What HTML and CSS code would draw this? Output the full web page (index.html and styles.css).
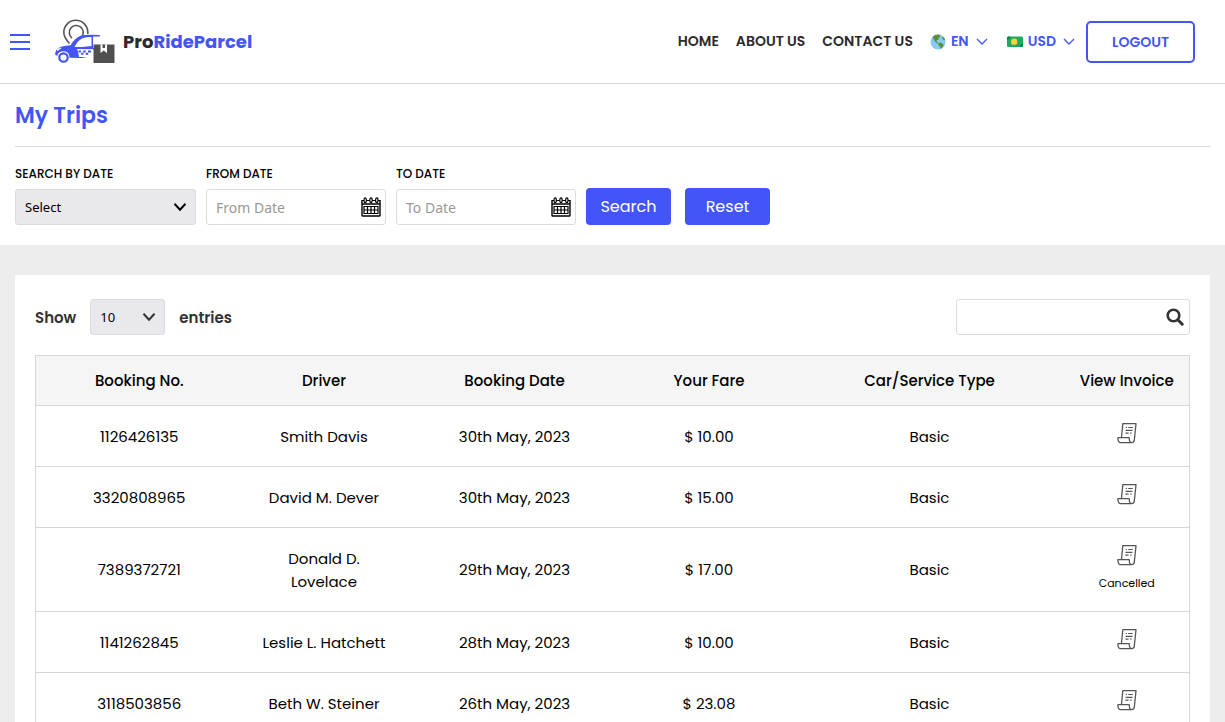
FILE: index.html
```html
<!DOCTYPE html>
<html lang="en">

<head>
    <meta charset="UTF-8">
    <meta name="viewport" content="width=device-width, initial-scale=1.0">
    <title>My Trips | ProRideParcel</title>
    <link rel="stylesheet" href="styles.css">
</head>

<body>
    <!-- shared icons -->
    <svg class="sprite" aria-hidden="true">
        <symbol id="arrow" viewBox="0 0 14 10">
            <path d="M1.5 1.8 7 7.8l5.5-6" fill="none" stroke="currentColor" stroke-width="2" />
        </symbol>
        <symbol id="arrow-thin" viewBox="0 0 12 8">
            <path d="M1 1l5 5 5-5" fill="none" stroke="currentColor" stroke-width="1.3" />
        </symbol>
        <symbol id="calendar" viewBox="0 0 20 20">
            <path d="M1 3v15.2q0 .8.8.8h16.4q.8 0 .8-.8V3M1 7h18" fill="none" stroke="currentColor" stroke-width="1.4" />
            <path d="M1 3.5h2M5.5 3.5h3M11.5 3.5h3M17 3.5h2" stroke="currentColor" stroke-width="1" />
            <g fill="none" stroke="currentColor" stroke-width="1.2">
                <ellipse cx="4.2" cy="3.2" rx="1.2" ry="2.3" />
                <ellipse cx="10" cy="3.2" rx="1.2" ry="2.3" />
                <ellipse cx="15.8" cy="3.2" rx="1.2" ry="2.3" />
            </g>
            <path d="M3 9.5h14v7H3zM3 13h14M6.5 9.5v7M10 9.5v7M13.5 9.5v7" fill="none" stroke="currentColor" stroke-width="1.2" />
        </symbol>
        <symbol id="invoice" viewBox="0 0 20 22">
            <path d="M4.5 15.2 5.8 1.7h13.2l-1.7 16.5q-.4 2.5-2.6 2.5H3.6Q.9 20.7.9 15.7h11.3q.1 5 2.5 5" fill="none" stroke="currentColor" stroke-width="1.3" stroke-linejoin="round" />
            <path d="M8.8 5.5H10M11.2 5.5h4.6M8.6 8.3h6.9M8.4 11.2h3.2M13.2 11.2h1.4" stroke="currentColor" stroke-width="1.2" />
        </symbol>
    </svg>

    <header class="header">
        <button class="menu-btn" aria-label="Menu"><span></span><span></span><span></span></button>
        <a href="#" class="logo">
            <svg class="logo-icon" viewBox="0 0 60 46" aria-hidden="true">
                <g fill="none" stroke="#555" stroke-width="1.6">
                    <path d="M14.5 24.5Q8.8 18.5 8.8 13.3a12 12 0 0 1 24 0v1.7" />
                    <path d="M17 19a7 7 0 1 1 10-1.5" />
                </g>
                <path d="M0 35.5q.2-3.500 2-5.5 3-3 13.5-3.8Q20 19 25.5 16.8q5.5-1.8 19.3-.8v1.5h-6.8v11.5l6 .5-5.5 1.2-16.500-.4q2 3.5 4.5 6.6l8.5.6-8 1.5-12.500-.3q0-6.500-5.8-6.5-5.9 0-6.400 4.8z" fill="#4355f9" />
                <path d="M19.5 28q3.5-7 8-8.8 3-1 9-1.1v9l-9.500.9z" fill="#fff" />
                <path d="M1 29.8l6-1-4.5 3.2z" fill="#fff" />
                <circle cx="8.5" cy="38.5" r="4.2" fill="#fff" stroke="#4355f9" stroke-width="2.2" />
                <path d="M22.5 30.3h15.7v5l-3 2.6H24z" fill="#fff" />
                <path d="M23.5 31.5H26v2h-2.5zM28.2 31.5h2.5v2h-2.5zM33 31.5h3v2h-3zM26 33.7h2.5v2H26zM30.7 33.7h2.5v2h-2.5z" fill="#4355f9" />
                <path d="M38.500 25.5h21V44h-21z" fill="#505050" />
                <path d="M45.5 25.5h6.5v8.5l-3.2-2.5-3.3 2.5z" fill="#fff" />
                <path d="M47.5 25.5H50V29h-2.5z" fill="#505050" />
            </svg>
            <span class="logo-text">Pro<span>RideParcel</span></span>
        </a>
        <nav class="nav">
            <a href="#">HOME</a>
            <a href="#">ABOUT US</a>
            <a href="#">CONTACT US</a>
            <button class="switcher">
                <svg width="16" height="16" viewBox="0 0 16 16" aria-hidden="true">
                    <circle cx="8" cy="8" r="7.5" fill="#89c9f9" />
                    <path d="M2.5 3Q5 .5 8.5.6l2 .7-.6 1.9-1.5.5.5 1.5-2.4 1.3.8 1.7 2 1-.7.8-2.6-1.6-2-2.4z" fill="#5c9237" />
                    <path d="M8.5 9l2.6-.2 2.7 1.8-1 2.2-2.2 2.3-.8-2.8-1.7-1.5zM12.3 2.3q2.4 1.4 3.1 4.2l-1.8-.6-1.4-1.6z" fill="#5c9237" />
                </svg>
                EN
                <svg class="caret" width="12" height="8"><use href="#arrow-thin" /></svg>
            </button>
            <button class="switcher">
                <svg width="16" height="16" viewBox="0 0 16 16" aria-hidden="true">
                    <rect y="2.5" width="16" height="10.5" rx="1.5" fill="#1aab5c" />
                    <path d="M0 5.5V4Q0 2.5 1.5 2.5H3q0 3-3 3zM16 10v1.500q0 1.5-1.5 1.5H13q0-3 3-3z" fill="#0b7d4b" />
                    <circle cx="7.2" cy="7.8" r="3.2" fill="#fbd043" />
                </svg>
                USD
                <svg class="caret" width="12" height="8"><use href="#arrow-thin" /></svg>
            </button>
            <button class="logout">LOGOUT</button>
        </nav>
    </header>

    <section class="filter-section">
        <h1>My Trips</h1>
        <form class="filters" onsubmit="return false">
            <div class="field">
                <label for="searchBy">SEARCH BY DATE</label>
                <div class="control">
                    <select id="searchBy">
                        <option>Select</option>
                        <option>Today</option>
                        <option>This Week</option>
                        <option>This Month</option>
                    </select>
                    <svg class="select-arrow" width="14" height="10"><use href="#arrow" /></svg>
                </div>
            </div>
            <div class="field">
                <label for="fromDate">FROM DATE</label>
                <div class="control">
                    <input type="text" id="fromDate" placeholder="From Date">
                    <svg class="calendar-icon" width="20" height="20"><use href="#calendar" /></svg>
                </div>
            </div>
            <div class="field">
                <label for="toDate">TO DATE</label>
                <div class="control">
                    <input type="text" id="toDate" placeholder="To Date">
                    <svg class="calendar-icon" width="20" height="20"><use href="#calendar" /></svg>
                </div>
            </div>
            <div class="button-group">
                <button type="submit" class="btn">Search</button>
                <button type="reset" class="btn">Reset</button>
            </div>
        </form>
    </section>

    <main class="content">
        <div class="card">
            <div class="table-tools">
                <div class="entries">
                    <label for="entries">Show</label>
                    <div class="control">
                        <select id="entries">
                            <option>10</option>
                            <option>25</option>
                            <option>50</option>
                        </select>
                        <svg class="select-arrow" width="14" height="10"><use href="#arrow" /></svg>
                    </div>
                    <span>entries</span>
                </div>
                <div class="control search-box">
                    <input type="text" aria-label="Search trips">
                    <svg class="search-icon" width="18" height="18" viewBox="0 0 18 18" aria-hidden="true">
                        <circle cx="7.5" cy="7.5" r="5.8" fill="none" stroke="currentColor" stroke-width="2.6" />
                        <path d="M11.8 11.8l4.4 4.4" stroke="currentColor" stroke-width="3" stroke-linecap="round" />
                    </svg>
                </div>
            </div>

            <table class="trips">
                <colgroup>
                    <col class="col-booking">
                    <col class="col-driver">
                    <col class="col-date">
                    <col class="col-fare">
                    <col class="col-type">
                    <col class="col-invoice">
                </colgroup>
                <thead>
                    <tr>
                        <th>Booking No.</th>
                        <th>Driver</th>
                        <th>Booking Date</th>
                        <th>Your Fare</th>
                        <th>Car/Service Type</th>
                        <th>View Invoice</th>
                    </tr>
                </thead>
                <tbody>
                    <tr>
                        <td>1126426135</td>
                        <td>Smith Davis</td>
                        <td>30th May, 2023</td>
                        <td>$ 10.00</td>
                        <td>Basic</td>
                        <td><a href="#" class="invoice" aria-label="View invoice"><svg width="20" height="22"><use href="#invoice" /></svg></a></td>
                    </tr>
                    <tr>
                        <td>3320808965</td>
                        <td>David M. Dever</td>
                        <td>30th May, 2023</td>
                        <td>$ 15.00</td>
                        <td>Basic</td>
                        <td><a href="#" class="invoice" aria-label="View invoice"><svg width="20" height="22"><use href="#invoice" /></svg></a></td>
                    </tr>
                    <tr>
                        <td>7389372721</td>
                        <td>Donald D. Lovelace</td>
                        <td>29th May, 2023</td>
                        <td>$ 17.00</td>
                        <td>Basic</td>
                        <td>
                            <a href="#" class="invoice" aria-label="View invoice"><svg width="20" height="22"><use href="#invoice" /></svg></a>
                            <div class="status">Cancelled</div>
                        </td>
                    </tr>
                    <tr>
                        <td>1141262845</td>
                        <td>Leslie L. Hatchett</td>
                        <td>28th May, 2023</td>
                        <td>$ 10.00</td>
                        <td>Basic</td>
                        <td><a href="#" class="invoice" aria-label="View invoice"><svg width="20" height="22"><use href="#invoice" /></svg></a></td>
                    </tr>
                    <tr>
                        <td>3118503856</td>
                        <td>Beth W. Steiner</td>
                        <td>26th May, 2023</td>
                        <td>$ 23.08</td>
                        <td>Basic</td>
                        <td><a href="#" class="invoice" aria-label="View invoice"><svg width="20" height="22"><use href="#invoice" /></svg></a></td>
                    </tr>
                </tbody>
            </table>
        </div>
    </main>
</body>

</html>
```
FILE: styles.css
```css
* {
    box-sizing: border-box;
}

body {
    margin: 0;
    font-family: Poppins, Inter, sans-serif;
    font-size: 15px;
    line-height: 23px;
    color: #000;
    background: #ededed;
}

button,
input,
select {
    font-family: inherit;
}

button {
    cursor: pointer;
}

svg {
    display: block;
}

.sprite {
    position: absolute;
    width: 0;
    height: 0;
}

/* header */
.header {
    display: flex;
    align-items: center;
    height: 84px;
    padding: 0 30px 0 10px;
    background: #fff;
    border-bottom: 1px solid #d8d8d8;
}

.menu-btn {
    display: flex;
    flex-direction: column;
    gap: 5px;
    width: 20px;
    padding: 0;
    border: none;
    background: none;
}

.menu-btn span {
    height: 2px;
    background: #4355f9;
}

.logo {
    display: flex;
    align-items: center;
    gap: 8px;
    margin-left: 25px;
    text-decoration: none;
}

.logo-icon {
    width: 60px;
    height: 46px;
}

.logo-text {
    font-size: 18px;
    font-weight: 700;
    color: #2b2b2b;
}

.logo-text span {
    color: #4355f9;
}

.nav {
    display: flex;
    align-items: center;
    gap: 17px;
    margin-left: auto;
    font-size: 14px;
    font-weight: 600;
}

.nav a {
    color: #2b2b2b;
    text-decoration: none;
}

.switcher {
    display: flex;
    align-items: center;
    gap: 5px;
    padding: 0;
    border: none;
    background: none;
    font-size: 14px;
    font-weight: 600;
    color: #4355f9;
}

.switcher + .switcher {
    margin-left: 2px;
}

.caret {
    margin-left: 2px;
}

.logout {
    width: 109px;
    height: 42px;
    margin-left: -6px;
    padding: 2px 0 0;
    border: 2px solid #4355f9;
    border-radius: 5px;
    background: #fff;
    font-size: 14px;
    font-weight: 600;
    color: #4355f9;
}

/* filters */
.filter-section {
    padding: 16px 15px 20px;
    background: #fff;
}

h1 {
    margin: 0 0 16px;
    padding-bottom: 14px;
    border-bottom: 1px solid #d8d8d8;
    font-size: 22px;
    font-weight: 600;
    line-height: 32px;
    color: #4355f9;
}

.filters {
    display: flex;
    align-items: flex-end;
    gap: 10px;
}

.field {
    width: 180px;
}

.field:first-child {
    width: 181px;
}

.field label {
    display: block;
    margin-bottom: 4px;
    font-size: 12px;
    font-weight: 500;
    line-height: 22px;
}

.control {
    position: relative;
}

.control input,
.control select {
    display: block;
    width: 100%;
    height: 36px;
    padding: 0 9px;
    border: 1px solid #dcdcdc;
    border-radius: 3px;
    font-family: "Noto Sans", sans-serif;
}

.control input {
    background: #fff;
    font-size: 14px;
}

.control input::placeholder {
    color: #999;
}

.control select {
    appearance: none;
    background: #e9e8ed;
    font-size: 13px;
    color: #000;
}

.select-arrow,
.calendar-icon,
.search-icon {
    position: absolute;
    pointer-events: none;
}

.select-arrow {
    top: 13px;
    right: 9px;
}

.calendar-icon {
    top: 8px;
    right: 5px;
}

.search-icon {
    top: 9px;
    right: 6px;
    color: #333;
}

.button-group {
    display: flex;
    gap: 14px;
}

.btn {
    width: 85px;
    height: 37px;
    padding: 0;
    border: none;
    border-radius: 4px;
    background: #4355f9;
    font-size: 16px;
    color: #fff;
}

/* table */
.content {
    padding: 30px 15px;
}

.card {
    padding: 24px 20px 20px;
    background: #fff;
}

.table-tools {
    display: flex;
    justify-content: space-between;
    margin-bottom: 20px;
}

.entries {
    display: flex;
    align-items: center;
    gap: 14px;
    font-weight: 600;
    color: #333;
}

.entries .control {
    width: 75px;
}

.search-box {
    width: 234px;
}

.search-box input {
    padding-right: 30px;
}

.trips {
    width: 100%;
    border: 1px solid #d8d8d8;
    border-collapse: collapse;
    table-layout: fixed;
    text-align: center;
}

.col-booking {
    width: 207px;
}

.col-driver {
    width: 163px;
}

.col-date {
    width: 218px;
}

.col-fare {
    width: 171px;
}

.col-type {
    width: 270px;
}

.col-invoice {
    width: 125px;
}

.trips tr {
    border-bottom: 1px solid #d8d8d8;
}

.trips th {
    padding: 13px 10px;
    background: #f5f5f5;
    font-weight: 500;
}

.trips td {
    padding: 16px;
}

.invoice {
    display: flex;
    justify-content: center;
    height: 28px;
    color: #555;
}

.status {
    font-size: 11px;
}
```
